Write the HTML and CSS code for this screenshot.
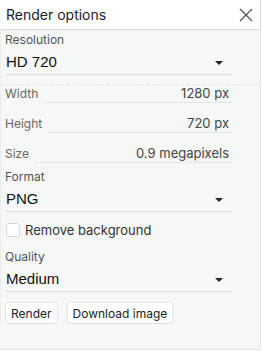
FILE: index.html
```html
<!DOCTYPE html>
<html lang="en">
<head>
  <meta charset="UTF-8">
  <link rel="stylesheet" href="styles.css">
</head>
<body>
  <div class="panel">
    <div class="header">
      <span class="title">Render options</span>
      <svg class="close" width="14" height="14" viewBox="0 0 14 14">
        <path d="M1 1 L13 13 M13 1 L1 13" stroke="#555" stroke-width="1.3" fill="none"/>
      </svg>
    </div>
    <div class="body">
      <div class="field">
        <div class="label">Resolution</div>
        <div class="select">
          <span>HD 720</span>
          <span class="caret"></span>
        </div>
      </div>

      <div class="custom">
        <div class="row">
          <span class="row-label">Width</span>
          <span class="row-value">1280 px</span>
        </div>
        <div class="row">
          <span class="row-label">Height</span>
          <span class="row-value">720 px</span>
        </div>
        <div class="row">
          <span class="row-label">Size</span>
          <span class="row-value">0.9 megapixels</span>
        </div>
      </div>

      <div class="field">
        <div class="label">Format</div>
        <div class="select">
          <span>PNG</span>
          <span class="caret"></span>
        </div>
      </div>

      <label class="check">
        <span class="box"></span>
        Remove background
      </label>

      <div class="field">
        <div class="label">Quality</div>
        <div class="select">
          <span>Medium</span>
          <span class="caret"></span>
        </div>
      </div>

      <div class="actions">
        <button class="btn">Render</button>
        <button class="btn">Download image</button>
      </div>
    </div>
  </div>
</body>
</html>
```

FILE: styles.css
```css
body {
  margin: 0;
  font-family: 'Inter', sans-serif;
  background: #ffffff;
}

.panel {
  width: 260px;
  height: 349px;
  border: 1px solid #e4e6e6;
  border-top: none;
  border-left: none;
  background: #f6f8f8;
  display: flex;
  flex-direction: column;
}

.header {
  height: 29px;
  background: #ffffff;
  display: flex;
  align-items: center;
  justify-content: space-between;
  padding: 0 7px 0 6px;
  box-shadow: 0 1px 2px rgba(0, 0, 0, 0.12);
}

.title {
  font-size: 14px;
  color: #222;
}

.close {
  display: block;
}

.body {
  padding: 3px 28px 0 4px;
  border-left: 1px solid #eceeee;
}

.label {
  font-size: 12px;
  color: #555;
  line-height: 16px;
}

.select {
  display: flex;
  align-items: center;
  justify-content: space-between;
  height: 26px;
  padding: 0 9px 0 1px;
  font-family: 'Liberation Sans', sans-serif;
  font-size: 15px;
  color: #111;
  border-bottom: 1px solid #dcdfe0;
}

.caret {
  width: 0;
  height: 0;
  border-left: 4px solid transparent;
  border-right: 4px solid transparent;
  border-top: 4px solid #222;
  margin-top: 3px;
}

.custom {
  margin: 9px -28px 6px -4px;
  padding: 0 28px 0 4px;
  border-top: 1px dashed #e2e4e4;
}

.row {
  display: flex;
  align-items: flex-end;
  height: 30px;
  font-size: 12px;
}

.row:first-child {
  height: 18px;
}

.row-label {
  color: #666;
  line-height: 18px;
  padding-right: 6px;
}

.row-value {
  flex: 1;
  text-align: right;
  color: #444;
  font-size: 13px;
  line-height: 18px;
  padding-right: 3px;
  border-bottom: 1px solid #e2e4e4;
}

.check {
  display: flex;
  align-items: center;
  gap: 5px;
  height: 26px;
  margin: 5px 0 6px;
  font-size: 13px;
  color: #333;
}

.box {
  width: 12px;
  height: 12px;
  border: 1px solid #d6d8d8;
  border-radius: 3px;
  background: #fff;
  margin-left: 1px;
}

.actions {
  display: flex;
  gap: 9px;
  margin-top: 10px;
}

.btn {
  font-family: 'Inter', sans-serif;
  font-size: 12px;
  color: #222;
  background: #fff;
  border: 1px solid #e2e4e4;
  border-radius: 3px;
  height: 22px;
  padding: 0 5px;
}
```
